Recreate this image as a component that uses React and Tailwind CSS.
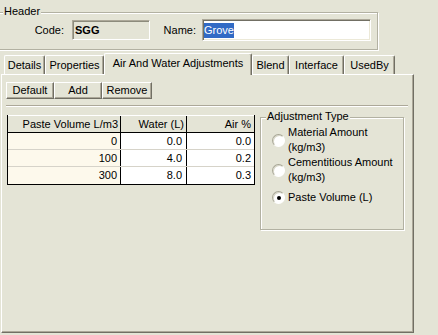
import React from "react";

function Radio({ checked }) {
  return (
    <span className="flex items-center justify-center w-[13px] h-[13px] shrink-0 rounded-full border border-t-[#a7a696] border-l-[#a7a696] border-r-white border-b-white bg-white shadow-[inset_1px_1px_0_#d8d7c8]">
      {checked && <span className="w-[4px] h-[4px] rounded-full bg-black" />}
    </span>
  );
}

function Tab({ label, w }) {
  return (
    <div
      className={`${w} h-[19px] flex items-center justify-center border-t border-l border-white border-r border-r-[#716f64] rounded-t-[2px] shadow-[inset_-1px_0_0_#aca899]`}
    >
      {label}
    </div>
  );
}

function Btn({ label, w }) {
  return (
    <div
      className={`${w} h-[17px] flex items-center justify-center border border-t-white border-l-white border-r-[#716f64] border-b-[#716f64] shadow-[inset_-1px_-1px_0_#aca899]`}
    >
      {label}
    </div>
  );
}

const rows = [
  ["0", "0.0", "0.0"],
  ["100", "4.0", "0.2"],
  ["300", "8.0", "0.3"],
];

export default function App() {
  return (
    <div className="w-[438px] h-[335px] overflow-hidden bg-[#e4e4d6] text-black text-[11px] leading-[13px] font-['Liberation_Sans',Arial,sans-serif]">
      {/* Header group */}
      <div className="relative ml-[-2px] mt-[12px] w-[380px] h-[38px] border border-[#b2b1a2] shadow-[inset_1px_1px_0_#fff,1px_1px_0_#fff]">
        <span className="absolute left-[4px] -top-[8px] px-[1px] bg-[#e4e4d6]">Header</span>
        <div className="mt-[6px] h-[22px] flex items-center">
          <div className="w-[65px] text-right">Code:</div>
          <div className="ml-[8px] w-[78px] h-[20px] flex items-center pl-[2px] font-bold border border-t-[#aca899] border-l-[#aca899] border-r-white border-b-white shadow-[inset_1px_1px_0_#8c8b7c]">
            SGG
          </div>
          <div className="w-[46px] text-right">Name:</div>
          <div className="ml-[6px] w-[169px] h-[22px] flex items-center pl-[1px] bg-white border border-t-[#aca899] border-l-[#aca899] border-r-white border-b-white shadow-[inset_1px_1px_0_#716f64,inset_-1px_-1px_0_#ece9d8]">
            <span className="bg-[#316ac5] text-white leading-[15px] h-[15px]">Grove</span>
          </div>
        </div>
      </div>

      {/* Tabs */}
      <div className="mt-[3px] ml-[4px] h-[21px] flex items-end">
        <Tab label="Details" w="w-[41px]" />
        <Tab label="Properties" w="w-[59px]" />
        <div className="relative z-10 w-[148px] h-[22px] -mb-[1px] flex items-start justify-center pt-[3px] bg-[#e4e4d6] border-t border-l border-white border-r border-r-[#716f64] rounded-t-[2px] shadow-[inset_-1px_0_0_#aca899]">
          Air And Water Adjustments
        </div>
        <Tab label="Blend" w="w-[37px]" />
        <Tab label="Interface" w="w-[55px]" />
        <Tab label="UsedBy" w="w-[51px]" />
      </div>

      {/* Panel */}
      <div className="ml-[1px] w-[413px] h-[259px] border border-t-white border-l-white border-r-[#716f64] border-b-[#716f64] shadow-[inset_-1px_-1px_0_#aca899]">
        <div className="mt-[7px] ml-[4px] flex">
          <Btn label="Default" w="w-[48px]" />
          <Btn label="Add" w="w-[48px]" />
          <Btn label="Remove" w="w-[50px]" />
        </div>
        <div className="mt-[6px] ml-[4px] w-[402px] h-[2px] border-t border-t-[#aca899] border-b border-b-white" />

        <div className="flex items-start">
          {/* Table */}
          <div className="mt-[8px] ml-[5px] w-[248px] border-l border-r border-b border-black">
            <div className="flex h-[18px] border-t border-t-white border-b border-b-black">
              <div className="w-[113px] border-r border-black text-right pr-[2px] flex items-center justify-end">Paste Volume L/m3</div>
              <div className="w-[66px] border-r border-black text-right pr-[2px] flex items-center justify-end">Water (L)</div>
              <div className="flex-1 text-right pr-[3px] flex items-center justify-end">Air %</div>
            </div>
            {rows.map((r, i) => (
              <div
                key={i}
                className={`flex h-[17px] ${i < 2 ? "border-b border-b-[#d6d3c9]" : ""}`}
              >
                <div className="w-[113px] bg-[#fdf9ec] border-r border-black flex items-center justify-end pr-[3px]">{r[0]}</div>
                <div className="w-[66px] bg-white border-r border-black flex items-center justify-end pr-[4px]">{r[1]}</div>
                <div className="flex-1 bg-white flex items-center justify-end pr-[3px]">{r[2]}</div>
              </div>
            ))}
          </div>

          {/* Adjustment Type group */}
          <div className="relative mt-[10px] ml-[5px] w-[144px] h-[113px] border border-[#b2b1a2] shadow-[inset_1px_1px_0_#fff,1px_1px_0_#fff] pl-[11px]">
            <span className="absolute left-[5px] -top-[8px] px-[1px] bg-[#e4e4d6]">Adjustment Type</span>
            <div className="mt-[7px] flex items-center gap-[3px]">
              <Radio />
              <div className="leading-[15px]">
                Material Amount
                <br />
                (kg/m3)
              </div>
            </div>
            <div className="flex items-center gap-[3px]">
              <Radio />
              <div className="leading-[15px]">
                Cementitious Amount
                <br />
                (kg/m3)
              </div>
            </div>
            <div className="mt-[5px] flex items-center gap-[3px]">
              <Radio checked />
              <div className="leading-[15px]">Paste Volume (L)</div>
            </div>
          </div>
        </div>
      </div>
    </div>
  );
}
